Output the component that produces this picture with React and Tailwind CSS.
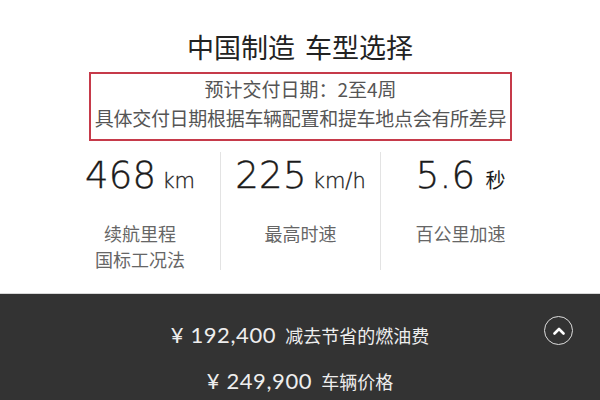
import React from "react";

const cjk = '"Noto Sans CJK SC", sans-serif';
const num = '"DejaVu Sans", "Noto Sans CJK SC", sans-serif';

function Stat({ value, unit, unitCjk, labels, first }) {
  return (
    <div className={`flex flex-col items-center h-[118px] ${first ? "" : "border-l border-[#e3e3e3]"}`}>
      <div className="flex items-baseline h-[48px] leading-[48px] text-[#1a1a1a]">
        <span className="text-[37px] font-extralight tracking-[0.3px] [-webkit-text-stroke:0.4px_#1a1a1a]" style={{ fontFamily: num }}>{value}</span>
        <span
          className={`${unitCjk ? "text-[20px] ml-[10px]" : "text-[21px] ml-[6px] font-extralight [-webkit-text-stroke:0.3px_#1a1a1a]"}`}
          style={{ fontFamily: unitCjk ? cjk : num }}
        >
          {unit}
        </span>
      </div>
      <div className="mt-[20px] flex flex-col items-center text-[18px] leading-[26px] text-[#666]" style={{ fontFamily: cjk }}>
        {labels.map((l) => (
          <div key={l}>{l}</div>
        ))}
      </div>
    </div>
  );
}

export default function App() {
  return (
    <div className="w-[600px] h-[400px] bg-white overflow-hidden flex flex-col" style={{ fontFamily: cjk }}>
      <div className="pt-[29px] flex justify-center text-[27px] leading-[36px] text-[#222]">
        <span>中国制造</span>
        <span className="ml-[10px]">车型选择</span>
      </div>
      <div className="mt-[7px] ml-[89px] w-[423px] h-[69px] border-2 border-[#c63a4a] flex flex-col items-center pb-[6px] text-[19px] leading-[29px] text-[#555]">
        <div>预计交付日期：2至4周</div>
        <div className="tracking-[-0.3px]">具体交付日期根据车辆配置和提车地点会有所差异</div>
      </div>
      <div className="mt-[11px] ml-[60px] w-[480px] grid grid-cols-3">
        <Stat first value="468" unit="km" labels={["续航里程", "国标工况法"]} />
        <Stat value="225" unit="km/h" labels={["最高时速"]} />
        <Stat value="5.6" unit="秒" unitCjk labels={["百公里加速"]} />
      </div>
      <div className="mt-[23px] h-px bg-[#d8d8d8]" />
      <div className="flex-1 bg-[#333333] relative flex flex-col items-center pt-[26px] text-[#eeeeee]">
        <div className="flex items-baseline h-[30px] leading-[30px]">
          <span className="text-[22px] tracking-[0.6px]" style={{ fontFamily: '"Lato", sans-serif' }}>¥ 192,400</span>
          <span className="ml-[9px] text-[18px]">减去节省的燃油费</span>
        </div>
        <div className="mt-[16px] flex items-baseline h-[30px] leading-[30px]">
          <span className="text-[22px] tracking-[0.6px]" style={{ fontFamily: '"Lato", sans-serif' }}>¥ 249,900</span>
          <span className="ml-[9px] text-[18px]">车辆价格</span>
        </div>
        <div className="absolute left-[544px] top-[22px] w-[29px] h-[29px] rounded-full border-[1.5px] border-[#dddddd] flex items-center justify-center">
          <svg width="12" height="8" viewBox="0 0 12 8" fill="none">
            <path d="M1.5 6.5 L6 2 L10.5 6.5" stroke="#ffffff" strokeWidth="2.6" strokeLinecap="round" strokeLinejoin="round" />
          </svg>
        </div>
      </div>
    </div>
  );
}
